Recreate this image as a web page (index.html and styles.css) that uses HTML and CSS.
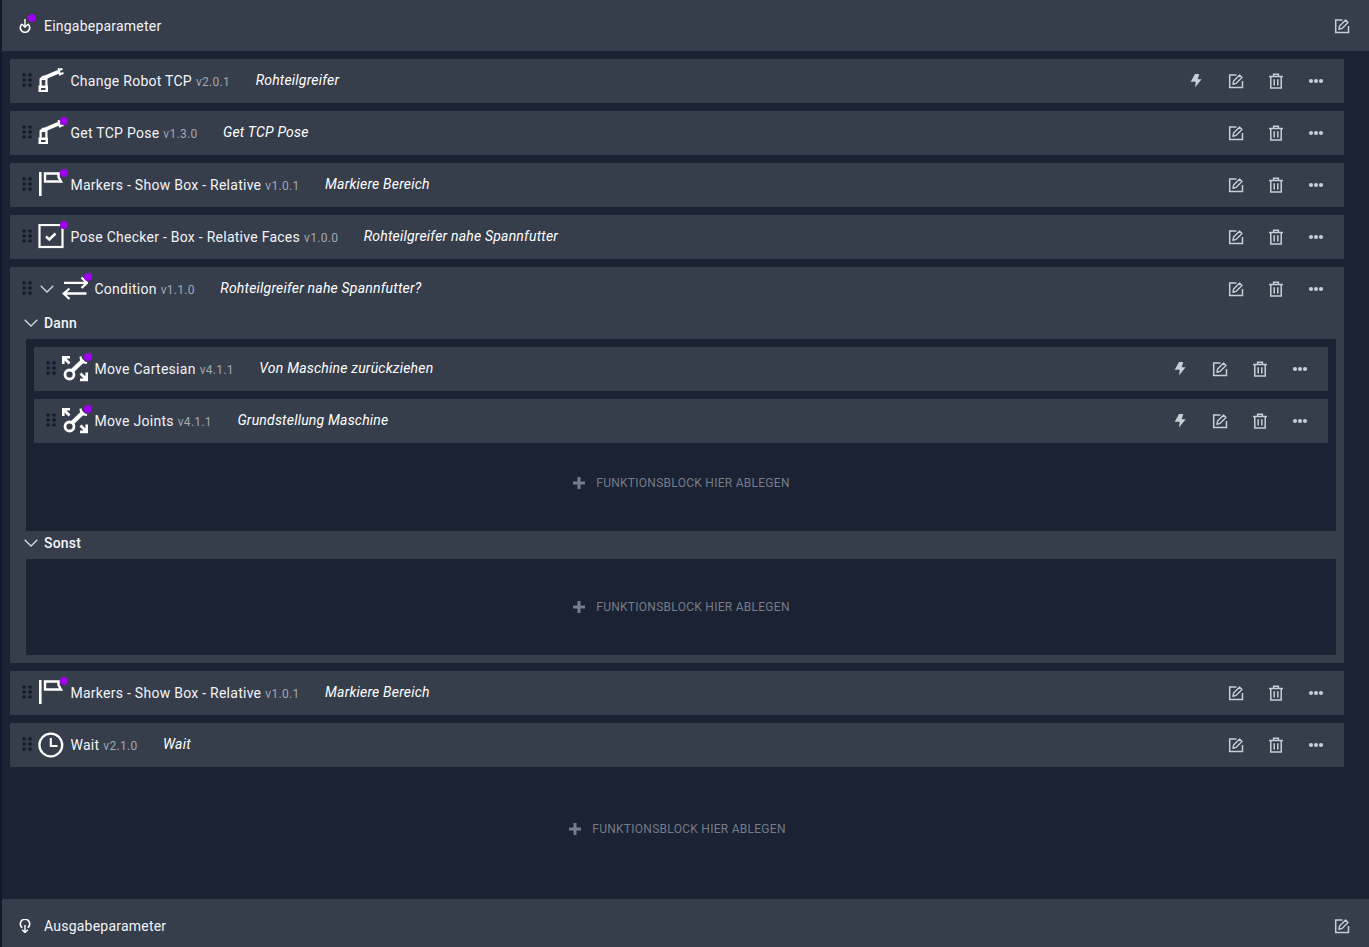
FILE: index.html
```html
<!DOCTYPE html>
<html lang="de">
<head>
<meta charset="utf-8">
<title>Programm</title>
<link rel="stylesheet" href="styles.css">
</head>
<body>
<svg class="defs" width="0" height="0" aria-hidden="true">
  <symbol id="i-edit" viewBox="0 0 16 16"><path d="M8.500 2H1.700V14.500H14.500V8" fill="none" stroke="currentColor" stroke-width="1.500"/><path d="M5 11.200 5.600 8 11.600 2 14 4.400 8 10.400Z" fill="none" stroke="currentColor" stroke-width="1.400" stroke-linejoin="round"/></symbol>
  <symbol id="i-trash" viewBox="0 0 16 16"><path d="M1 3.500H15M5.600 3.200V1.200H10.400V3.200M2.800 3.500V15H13.200V3.500M6.200 6.200V12.500M9.800 6.200V12.500" fill="none" stroke="currentColor" stroke-width="1.500"/></symbol>
  <symbol id="i-bolt" viewBox="0 0 16 16"><path d="M7 1 2.700 8.700H7.700L7 14.500 13.700 6.300H9.700L11.300 1Z" fill="currentColor"/></symbol>
  <symbol id="i-dots" viewBox="0 0 16 16"><circle cx="3" cy="8" r="2.100"/><circle cx="8" cy="8" r="2.100"/><circle cx="13" cy="8" r="2.100"/></symbol>
  <symbol id="i-grip" viewBox="0 0 10 14"><circle cx="2" cy="2" r="1.800"/><circle cx="8" cy="2" r="1.800"/><circle cx="2" cy="7" r="1.800"/><circle cx="8" cy="7" r="1.800"/><circle cx="2" cy="12" r="1.800"/><circle cx="8" cy="12" r="1.800"/></symbol>
  <symbol id="i-chev" viewBox="0 0 14 8"><path d="M.7.7 7 7 13.300.7" fill="none" stroke="currentColor" stroke-width="1.300"/></symbol>
  <symbol id="i-robot" viewBox="0 0 26 26"><path fill="currentColor" fill-rule="evenodd" d="M.5 17.500H10V24H.5ZM3 20V22H7.500V20Z"/><path fill="currentColor" d="M1.500 18V10.500L5 7.500 9.500 9V18H7.300V12H3.700V18Z"/><path d="M4.500 10.500 20.500 3.800" fill="none" stroke="currentColor" stroke-width="3.800"/><path d="M20.500 0 22 7.500M20 2.500 24.500 .8M21 6.500 25.500 5" fill="none" stroke="currentColor" stroke-width="1.900"/></symbol>
  <symbol id="i-flag" viewBox="0 0 26 26"><path d="M2.300 0V24" fill="none" stroke="currentColor" stroke-width="2.600"/><path d="M7 1.500H20.500L20.500 5 23 9.500H7Z" fill="none" stroke="currentColor" stroke-width="2.400"/></symbol>
  <symbol id="i-check" viewBox="0 0 26 26"><rect x="1.500" y="1" width="23" height="22" fill="none" stroke="currentColor" stroke-width="2.200"/><path d="M8 12.500 11.300 15.500 17.500 9.500" fill="none" stroke="currentColor" stroke-width="2.500"/></symbol>
  <symbol id="i-cond" viewBox="0 0 26 26"><path d="M2 6.800H25M19.500 1.500 25 6.800 19.500 12" fill="none" stroke="currentColor" stroke-width="2.300"/><path d="M24.500 17.500H2M7.500 12.500 1.700 17.500 7.500 23" fill="none" stroke="currentColor" stroke-width="2.300"/></symbol>
  <symbol id="i-move" viewBox="0 0 26 26"><path d="M1.200 8V1.200H8M1.500 1.500 7.500 7.500M24.800 16.500V23.800H18M24.500 23.500 18.500 17.500" fill="none" stroke="currentColor" stroke-width="2.800"/><path d="M9.500 15.500 21.500 4" fill="none" stroke="currentColor" stroke-width="4.400"/><path d="M18.500 .5 19.500 6 25 7" fill="none" stroke="currentColor" stroke-width="2.200"/><circle cx="7.500" cy="18.500" r="4.500" fill="#363d4b" stroke="currentColor" stroke-width="2.800"/></symbol>
  <symbol id="i-clock" viewBox="0 0 26 26"><circle cx="12.800" cy="13" r="11.400" fill="none" stroke="currentColor" stroke-width="2.300"/><path d="M12.800 6V14H19.500" fill="none" stroke="currentColor" stroke-width="2.100"/></symbol>
  <symbol id="i-in" viewBox="0 0 12 14"><path d="M3.200 4.800A4.700 4.700 0 1 0 8.800 4.800" fill="none" stroke="currentColor" stroke-width="1.600"/><path d="M6 0V8M3.200 5.300 6 8.200 8.800 5.300" fill="none" stroke="currentColor" stroke-width="1.400"/></symbol>
  <symbol id="i-out" viewBox="0 0 12 14"><path d="M3.200 8.700A4.700 4.700 0 1 1 8.800 8.700" fill="none" stroke="currentColor" stroke-width="1.600"/><path d="M6 6V13.800M3.200 10.800 6 13.600 8.800 10.800" fill="none" stroke="currentColor" stroke-width="1.400"/></symbol>
  <symbol id="i-plus" viewBox="0 0 12 12"><path d="M6 0V12M0 6H12" fill="none" stroke="currentColor" stroke-width="3"/></symbol>
</svg>

<div class="app">
  <header class="bar">
    <span class="bar-icon"><svg class="s12"><use href="#i-in"/></svg><i class="dot dot-bar"></i></span>
    <span class="bar-title">Eingabeparameter</span>
    <button class="act bar-act"><svg class="s16"><use href="#i-edit"/></svg></button>
  </header>

  <main class="list">
    <div class="row">
      <svg class="grip"><use href="#i-grip"/></svg>
      <span class="ico"><svg class="s26"><use href="#i-robot"/></svg></span>
      <span class="name">Change Robot TCP</span><span class="ver">v2.0.1</span><em class="desc">Rohteilgreifer</em>
      <span class="acts"><button class="act"><svg class="s16"><use href="#i-bolt"/></svg></button><button class="act"><svg class="s16"><use href="#i-edit"/></svg></button><button class="act"><svg class="s16"><use href="#i-trash"/></svg></button><button class="act"><svg class="s16"><use href="#i-dots"/></svg></button></span>
    </div>
    <div class="row">
      <svg class="grip"><use href="#i-grip"/></svg>
      <span class="ico"><svg class="s26"><use href="#i-robot"/></svg><i class="dot"></i></span>
      <span class="name">Get TCP Pose</span><span class="ver">v1.3.0</span><em class="desc">Get TCP Pose</em>
      <span class="acts"><button class="act"><svg class="s16"><use href="#i-edit"/></svg></button><button class="act"><svg class="s16"><use href="#i-trash"/></svg></button><button class="act"><svg class="s16"><use href="#i-dots"/></svg></button></span>
    </div>
    <div class="row">
      <svg class="grip"><use href="#i-grip"/></svg>
      <span class="ico"><svg class="s26"><use href="#i-flag"/></svg><i class="dot"></i></span>
      <span class="name">Markers - Show Box - Relative</span><span class="ver">v1.0.1</span><em class="desc">Markiere Bereich</em>
      <span class="acts"><button class="act"><svg class="s16"><use href="#i-edit"/></svg></button><button class="act"><svg class="s16"><use href="#i-trash"/></svg></button><button class="act"><svg class="s16"><use href="#i-dots"/></svg></button></span>
    </div>
    <div class="row">
      <svg class="grip"><use href="#i-grip"/></svg>
      <span class="ico"><svg class="s26"><use href="#i-check"/></svg><i class="dot"></i></span>
      <span class="name">Pose Checker - Box - Relative Faces</span><span class="ver">v1.0.0</span><em class="desc">Rohteilgreifer nahe Spannfutter</em>
      <span class="acts"><button class="act"><svg class="s16"><use href="#i-edit"/></svg></button><button class="act"><svg class="s16"><use href="#i-trash"/></svg></button><button class="act"><svg class="s16"><use href="#i-dots"/></svg></button></span>
    </div>

    <section class="cond">
      <div class="row">
        <svg class="grip"><use href="#i-grip"/></svg>
        <svg class="chev chev-row"><use href="#i-chev"/></svg>
        <span class="ico"><svg class="s26"><use href="#i-cond"/></svg><i class="dot"></i></span>
        <span class="name">Condition</span><span class="ver">v1.1.0</span><em class="desc">Rohteilgreifer nahe Spannfutter?</em>
        <span class="acts"><button class="act"><svg class="s16"><use href="#i-edit"/></svg></button><button class="act"><svg class="s16"><use href="#i-trash"/></svg></button><button class="act"><svg class="s16"><use href="#i-dots"/></svg></button></span>
      </div>
      <div class="branch"><svg class="chev"><use href="#i-chev"/></svg><span>Dann</span></div>
      <div class="slot">
        <div class="row">
          <svg class="grip"><use href="#i-grip"/></svg>
          <span class="ico"><svg class="s26"><use href="#i-move"/></svg><i class="dot"></i></span>
          <span class="name">Move Cartesian</span><span class="ver">v4.1.1</span><em class="desc">Von Maschine zurückziehen</em>
          <span class="acts"><button class="act"><svg class="s16"><use href="#i-bolt"/></svg></button><button class="act"><svg class="s16"><use href="#i-edit"/></svg></button><button class="act"><svg class="s16"><use href="#i-trash"/></svg></button><button class="act"><svg class="s16"><use href="#i-dots"/></svg></button></span>
        </div>
        <div class="row">
          <svg class="grip"><use href="#i-grip"/></svg>
          <span class="ico"><svg class="s26"><use href="#i-move"/></svg><i class="dot"></i></span>
          <span class="name">Move Joints</span><span class="ver">v4.1.1</span><em class="desc">Grundstellung Maschine</em>
          <span class="acts"><button class="act"><svg class="s16"><use href="#i-bolt"/></svg></button><button class="act"><svg class="s16"><use href="#i-edit"/></svg></button><button class="act"><svg class="s16"><use href="#i-trash"/></svg></button><button class="act"><svg class="s16"><use href="#i-dots"/></svg></button></span>
        </div>
        <div class="drop drop-a"><svg class="plus"><use href="#i-plus"/></svg><span>FUNKTIONSBLOCK HIER ABLEGEN</span></div>
      </div>
      <div class="branch"><svg class="chev"><use href="#i-chev"/></svg><span>Sonst</span></div>
      <div class="slot slot-empty">
        <div class="drop drop-b"><svg class="plus"><use href="#i-plus"/></svg><span>FUNKTIONSBLOCK HIER ABLEGEN</span></div>
      </div>
    </section>

    <div class="row">
      <svg class="grip"><use href="#i-grip"/></svg>
      <span class="ico"><svg class="s26"><use href="#i-flag"/></svg><i class="dot"></i></span>
      <span class="name">Markers - Show Box - Relative</span><span class="ver">v1.0.1</span><em class="desc">Markiere Bereich</em>
      <span class="acts"><button class="act"><svg class="s16"><use href="#i-edit"/></svg></button><button class="act"><svg class="s16"><use href="#i-trash"/></svg></button><button class="act"><svg class="s16"><use href="#i-dots"/></svg></button></span>
    </div>
    <div class="row">
      <svg class="grip"><use href="#i-grip"/></svg>
      <span class="ico"><svg class="s26"><use href="#i-clock"/></svg></span>
      <span class="name">Wait</span><span class="ver">v2.1.0</span><em class="desc">Wait</em>
      <span class="acts"><button class="act"><svg class="s16"><use href="#i-edit"/></svg></button><button class="act"><svg class="s16"><use href="#i-trash"/></svg></button><button class="act"><svg class="s16"><use href="#i-dots"/></svg></button></span>
    </div>
    <div class="drop drop-c"><svg class="plus"><use href="#i-plus"/></svg><span>FUNKTIONSBLOCK HIER ABLEGEN</span></div>
  </main>

  <footer class="bar bar-foot">
    <span class="bar-icon"><svg class="s12"><use href="#i-out"/></svg></span>
    <span class="bar-title">Ausgabeparameter</span>
    <button class="act bar-act"><svg class="s16"><use href="#i-edit"/></svg></button>
  </footer>
</div>
</body>
</html>
```

FILE: styles.css
```css
* { box-sizing: border-box; }
html, body { margin: 0; height: 100%; overflow: hidden; }
body {
  background: #101a2c;
  font-family: Roboto, "Liberation Sans", sans-serif;
  color: #f2f4f7;
}
.defs { position: absolute; }
.app {
  margin-left: 2px;
  display: flex;
  flex-direction: column;
  background: #1a2234;
}
.bar {
  flex: none;
  height: 51px;
  display: flex;
  align-items: center;
  padding: 0 7px 0 17px;
  background: #363d4b;
}
.bar-foot { height: 52px; padding-top: 1px; }
.bar-icon { position: relative; width: 25px; display: flex; }
.bar-title { font-size: 14px; letter-spacing: .22px; }
.bar-act { margin-left: auto; }
.s12 { width: 12px; height: 14px; color: #fff; }
.s16 { width: 16px; height: 16px; fill: currentColor; }
.s26 { width: 26px; height: 26px; color: #fff; display: block; }
.dot {
  position: absolute;
  top: -3px;
  right: -4px;
  width: 8px;
  height: 8px;
  border-radius: 50%;
  background: #a000f0;
}
.dot-bar { top: -5px; right: 8px; }
.list {
  flex: none;
  display: flex;
  flex-direction: column;
  gap: 8px;
  padding: 8px 25px 8px 8px;
}
.row {
  flex: none;
  height: 44px;
  display: flex;
  align-items: center;
  padding: 0 8px 0 12px;
  background: #363d4b;
}
.grip { width: 10px; height: 14px; fill: #121a2b; flex: none; margin-top: -2px; margin-right: 6px; }
.chev { width: 14px; height: 8px; color: #d5d9e0; flex: none; }
.chev-row { margin: 0 8px 0 2px; }
.ico { position: relative; flex: none; margin-right: 6.500px; }
.name { font-size: 14px; letter-spacing: .26px; white-space: nowrap; }
.ver { font-size: 12px; color: #a3a8b1; letter-spacing: .3px; margin-left: 4px; white-space: nowrap; margin-top: 1px; }
.desc { font-size: 14px; letter-spacing: .2px; margin-left: 25.500px; margin-top: -3px; white-space: nowrap; color: #fff; }
.acts { margin-left: auto; display: flex; }
.act {
  width: 40px;
  height: 40px;
  padding: 0;
  border: 0;
  background: none;
  color: #c8cdd6;
  display: flex;
  align-items: center;
  justify-content: center;
}
.cond {
  flex: none;
  background: #363d4b;
  padding-bottom: 8px;
}
.branch {
  height: 28px;
  display: flex;
  align-items: center;
  gap: 6px;
  padding: 0 0 4px 14px;
  font-size: 14px;
  font-weight: 500;
  letter-spacing: .2px;
}
.slot {
  margin: 0 8px 0 16px;
  background: #1a2234;
  padding: 8px 8px 0;
  display: flex;
  flex-direction: column;
  gap: 8px;
}
.slot-empty { padding: 0; }
.drop {
  display: flex;
  align-items: center;
  justify-content: center;
  gap: 11px;
  font-size: 12px;
  letter-spacing: .27px;
  color: #767c88;
}
.drop-a { height: 88px; margin-top: -8px; padding-bottom: 9px; }
.drop-b { height: 96px; }
.drop-c { height: 124px; margin-top: -8px; }
.plus { width: 12px; height: 12px; margin-left: 1px; color: #767c88; }
```
